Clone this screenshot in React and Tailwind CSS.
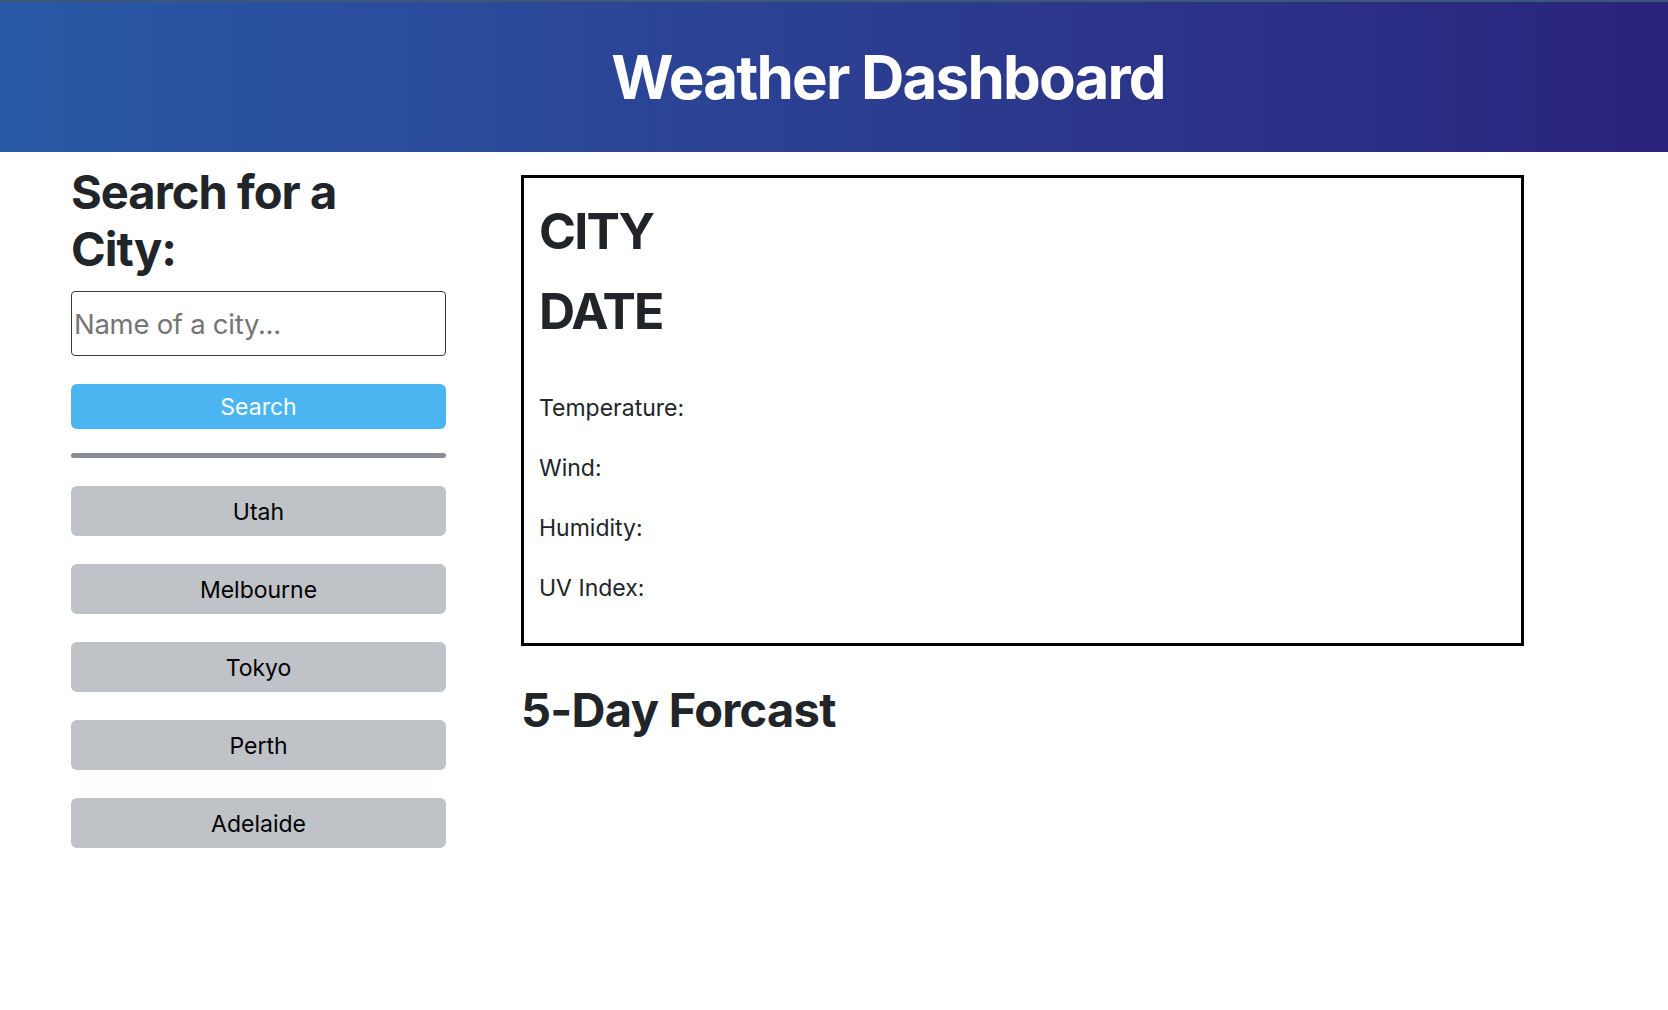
import React from "react";

const cities = ["Utah", "Melbourne", "Tokyo", "Perth", "Adelaide"];
const stats = ["Temperature:", "Wind:", "Humidity:", "UV Index:"];

const App = () => {
  return (
    <div className="min-h-screen bg-white text-[#212529] font-['Inter',sans-serif]">
      <header className="h-[152px] border-t-2 border-[#3d5877] bg-gradient-to-r from-[#2859a6] to-[#2a237c] flex items-center justify-center pl-[108px]">
        <h1 className="text-[60px] leading-none font-bold text-white tracking-[-0.03em]">
          Weather Dashboard
        </h1>
      </header>

      <main className="flex pl-[71px] gap-[75px]">
        <aside className="w-[375px] pt-[11px]">
          <h2 className="text-[47px] leading-[57px] font-bold tracking-[-0.02em]">
            Search for a
            <br />
            City:
          </h2>
          <input
            type="text"
            placeholder="Name of a city..."
            className="mt-[14px] w-full h-[65px] px-[2px] border border-[#3a3a3a] rounded-[4px] text-[27.5px] tracking-[-0.01em] placeholder:text-[#757575] outline-none"
          />
          <button className="mt-[28px] w-full h-[45px] rounded-[6px] bg-[#4ab5f0] text-white text-[23px] pt-[2px]">
            Search
          </button>
          <div className="mt-[24px] h-[5px] rounded-full bg-[#878d94]" />
          <div className="mt-[28px] flex flex-col gap-[28px]">
            {cities.map((c) => (
              <button
                key={c}
                className="h-[50px] w-full rounded-[6px] bg-[#bfc3c7] text-black text-[23px] pt-[2px]"
              >
                {c}
              </button>
            ))}
          </div>
        </aside>

        <section className="w-[1003px] pt-[23px]">
          <div className="border-[3px] border-black px-[15px] pt-[23px] pb-[37px]">
            <h2 className="text-[50px] leading-[61px] font-bold tracking-[-0.035em]">CITY</h2>
            <h2 className="mt-[19px] text-[50px] leading-[61px] font-bold tracking-[-0.035em]">DATE</h2>
            <div className="mt-[48px] flex flex-col gap-[24px]">
              {stats.map((s) => (
                <p key={s} className="text-[23px] leading-[36px]">
                  {s}
                </p>
              ))}
            </div>
          </div>
          <h2 className="mt-[35px] text-[47px] leading-[57px] font-bold tracking-[-0.015em]">5-Day Forcast</h2>
        </section>
      </main>
    </div>
  );
};

export default App;
